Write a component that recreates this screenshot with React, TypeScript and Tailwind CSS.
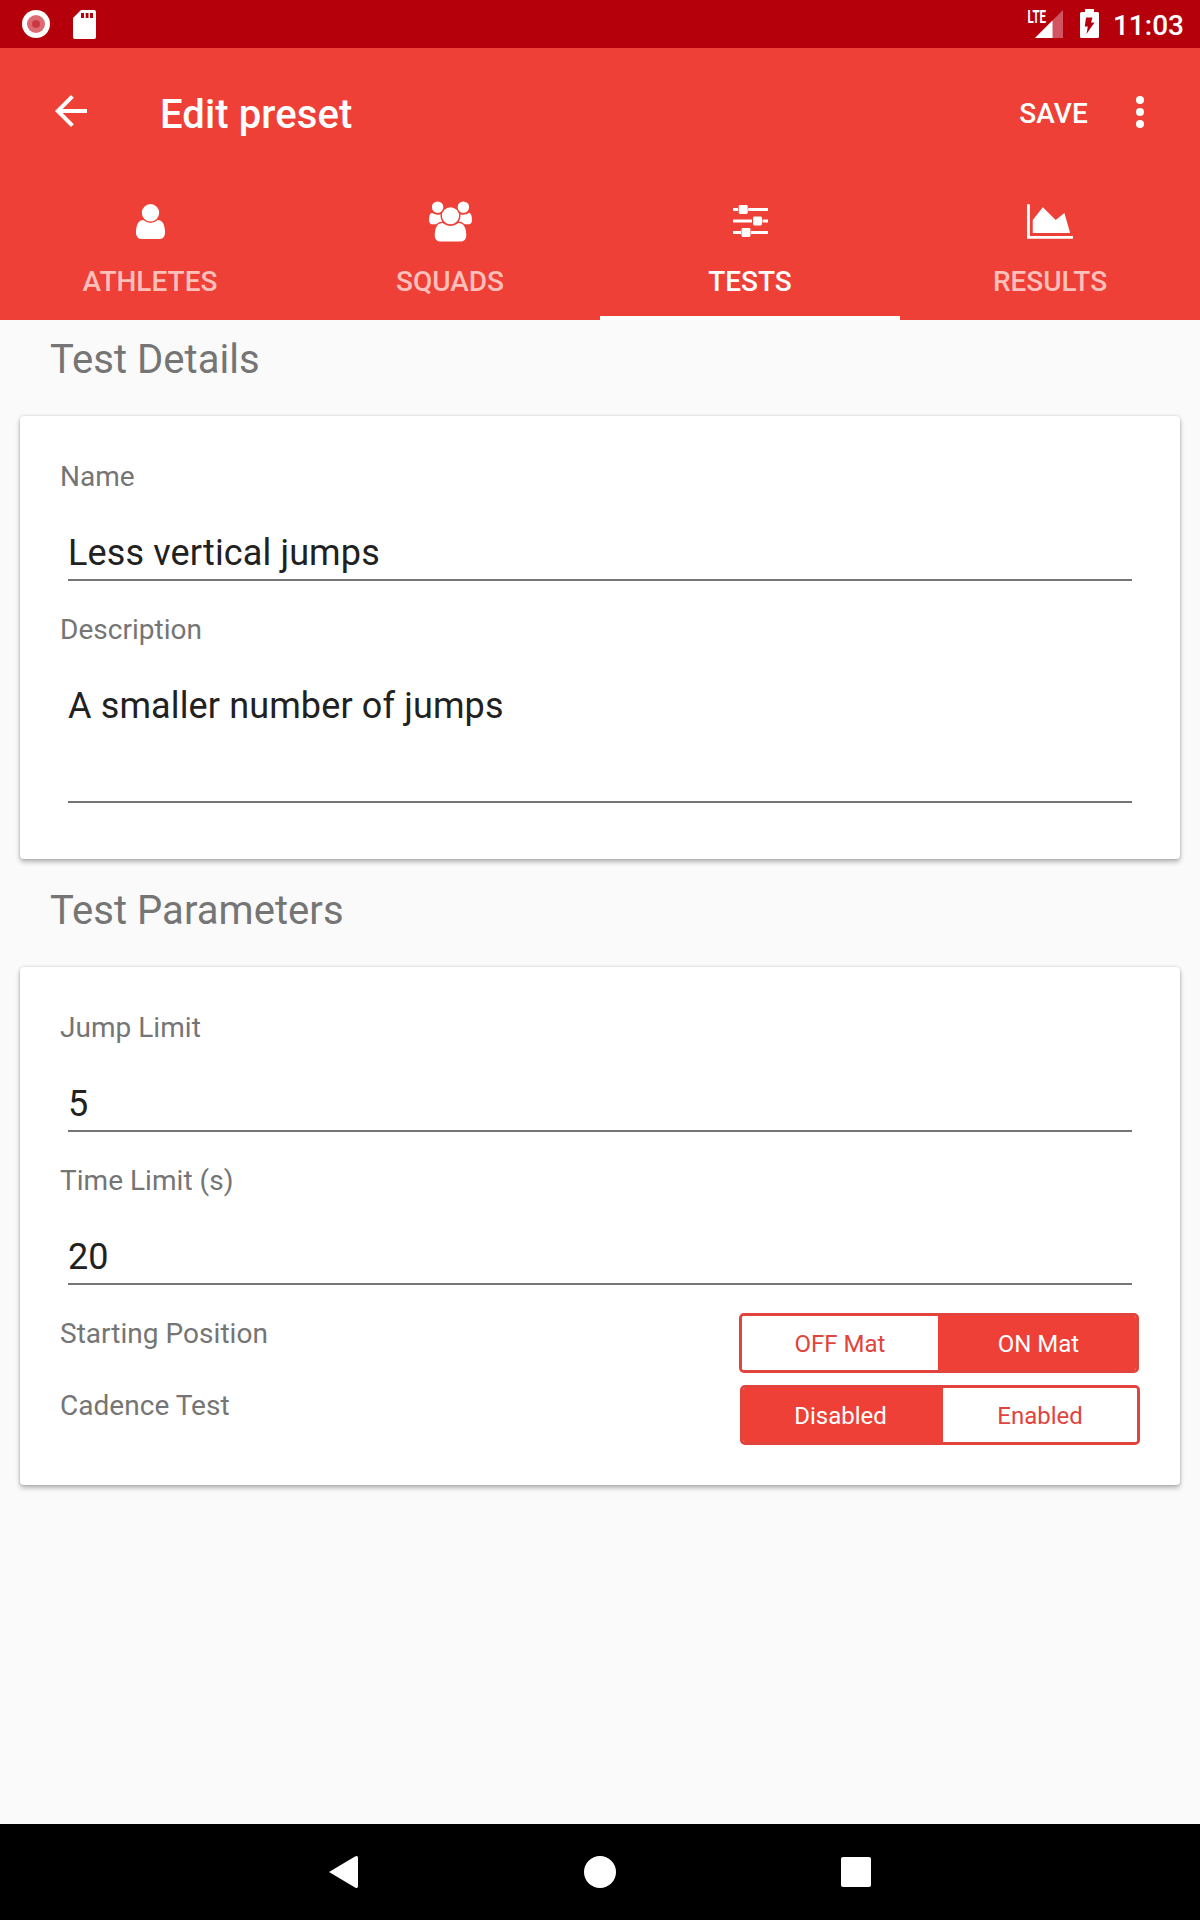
import type { ReactNode } from 'react'

const TABS = [
  { label: 'ATHLETES', icon: <UserIcon />, active: false },
  { label: 'SQUADS', icon: <UsersIcon />, active: false },
  { label: 'TESTS', icon: <SlidersIcon />, active: true },
  { label: 'RESULTS', icon: <ChartIcon />, active: false },
]

function UserIcon() {
  return (
    <svg width="29" height="35" viewBox="256 128 1280 1536" fill="currentColor">
      <path d="M1536 1399q0 109-62.5 187t-150.5 78h-854q-88 0-150.5-78t-62.5-187q0-85 8.5-160.5t31.5-152 58.5-131 94-89 134.5-34.5q131 128 313 128t313-128q76 0 134.5 34.5t94 89 58.5 131 31.5 152 8.5 160.5zm-256-887q0 159-112.5 271.5t-271.5 112.5-271.5-112.5-112.5-271.5 112.5-271.5 271.5-112.5 271.5 112.5 112.5 271.5z" />
    </svg>
  )
}

function UsersIcon() {
  return (
    <svg width="43" height="41" viewBox="0 0 1920 1792" fill="currentColor">
      <path d="M593 896q-162 5-265 128h-134q-82 0-138-40.5t-56-118.5q0-353 124-353 6 0 43.5 21t97.5 42.5 119 21.5q67 0 133-23-5 37-5 66 0 139 81 256zm1071 637q0 120-73 189.5t-194 69.5h-874q-121 0-194-69.5t-73-189.5q0-53 3.5-103.5t14-109 26.5-108.5 43-97.5 62-81 85.5-53.5 111.5-20q10 0 43 21.5t73 48 107 48 135 21.5 135-21.5 107-48 73-48 43-21.5q61 0 111.5 20t85.5 53.5 62 81 43 97.5 26.5 108.5 14 109 3.5 103.5zm-1024-1277q0 106-75 181t-181 75-181-75-75-181 75-181 181-75 181 75 75 181zm704 384q0 159-112.5 271.5t-271.5 112.5-271.5-112.5-112.5-271.5 112.5-271.5 271.5-112.5 271.5 112.5 112.5 271.5zm576 225q0 78-56 118.5t-138 40.5h-134q-103-123-265-128 81-117 81-256 0-29-5-66 66 23 133 23 59 0 119-21.5t97.5-42.5 43.5-21q124 0 124 353zm-128-609q0 106-75 181t-181 75-181-75-75-181 75-181 181-75 181 75 75 181z" />
    </svg>
  )
}

function SlidersIcon() {
  return (
    <svg className="-mt-px" width="35" height="32" viewBox="0 0 35 32" fill="currentColor">
      <path d="M0 3h5v3H0zM15.200 3H35v3H15.200zM0 14.500h19v3H0zM29.500 14.500H35v3h-5.500zM0 26h8v3H0zM18 26h17v3H18z" />
      <rect x="5.700" width="9" height="9" rx="1.400" />
      <rect x="20" y="11.500" width="9" height="9" rx="1.400" />
      <rect x="8.500" y="23" width="9" height="9" rx="1.400" />
    </svg>
  )
}

function ChartIcon() {
  return (
    <svg width="46" height="35" viewBox="0 128 2048 1536" fill="currentColor">
      <path d="M2048 1536v128h-2048v-1536h128v1408h1920zm-384-1024l256 896h-1664v-576l448-576 576 576z" />
    </svg>
  )
}

function StatusBar() {
  return (
    <div className="flex h-12 items-center bg-[#b5000b] pl-[22px] pr-4 text-white">
      <svg width="28" height="28" viewBox="0 0 28 28">
        <circle cx="14" cy="14" r="14" fill="#fff" />
        <circle cx="14" cy="14" r="9" fill="#db6b74" />
        <circle cx="14" cy="14" r="4" fill="#cb3844" />
      </svg>
      <svg className="ml-[23px]" width="23" height="29" viewBox="0 0 23 29">
        <path d="M8 0h13q2 0 2 2v25q0 2-2 2H2q-2 0-2-2V8z" fill="#fff" />
        <path d="M8 3h3v5H8zM12.700 3h2.800v5h-2.800zM17 3h3v5h-3z" fill="#b5000b" />
      </svg>
      <div className="flex-1" />
      <svg className="overflow-visible" width="36" height="28" viewBox="0 0 36 28">
        <path d="M35 0v28H7z" fill="#d05560" />
        <path d="M24.500 10.500V28H7z" fill="#fff" />
        <text x="-0.500" y="12.700" fontSize="17.500" fontWeight="700" fontFamily="Roboto, sans-serif" textLength="18.500" lengthAdjust="spacingAndGlyphs" fill="#fff">LTE</text>
      </svg>
      <svg className="-mt-px ml-4" width="19" height="29" viewBox="0 0 19 29">
        <path d="M5 0h9v3h3.500q1.500 0 1.500 1.500v23q0 1.500-1.500 1.500h-16Q0 29 0 27.500v-23Q0 3 1.500 3H5z" fill="#fff" />
        <path d="M6 8.500h6.500L11 13.500h3.500L6.500 25l1.300-7.500H4.800z" fill="#b5000b" />
      </svg>
      <span className="ml-[14px] mt-1 text-[28px] font-medium leading-8">11:03</span>
    </div>
  )
}

function Toolbar() {
  return (
    <div className="flex h-32 items-center pl-[47px] pr-9">
      <svg className="-mt-0.5" width="48" height="48" viewBox="0 0 24 24" fill="currentColor">
        <path d="M20 11H7.830l5.590-5.590L12 4l-8 8 8 8 1.410-1.410L7.830 13H20v-2z" />
      </svg>
      <h1 className="ml-[65px] mt-1.5 flex-1 text-[40px] font-medium leading-[48px] tracking-[0.1px]">Edit preset</h1>
      <button className="mt-1 text-[28px] font-medium leading-8 tracking-[0.15px]">SAVE</button>
      <svg className="ml-7" width="48" height="48" viewBox="0 0 24 24" fill="currentColor">
        <circle cx="12" cy="6" r="2" />
        <circle cx="12" cy="12" r="2" />
        <circle cx="12" cy="18" r="2" />
      </svg>
    </div>
  )
}

function TabBar() {
  return (
    <nav className="grid h-36 grid-cols-4">
      {TABS.map((tab) => (
        <button key={tab.label} className={`flex flex-col items-center border-b-4 pt-[22px] ${tab.active ? 'border-white' : 'border-transparent'}`}>
          <span className="flex h-[47px] items-center">{tab.icon}</span>
          <span className={`mt-[21px] text-[28px] font-medium leading-8 ${tab.active ? 'text-white' : 'text-[#ffbfba]'}`}>{tab.label}</span>
        </button>
      ))}
    </nav>
  )
}

function SectionTitle({ children }: { children: ReactNode }) {
  return <h2 className="pl-[30px] text-[40px] leading-[47px] tracking-[0.05px] text-[#757575]">{children}</h2>
}

function Card({ children }: { children: ReactNode }) {
  return (
    <div className="mt-[33px] rounded-[4px] bg-white pl-10 pr-10 pt-[44px] shadow-[0_3px_5px_rgba(0,0,0,0.28),0_0_3px_rgba(0,0,0,0.16)]">
      {children}
    </div>
  )
}

function Label({ children }: { children: ReactNode }) {
  return <div className="text-[28px] leading-[33px] tracking-[0.03px] text-[#757575]">{children}</div>
}

function Field({ label, value, multiline }: { label: string; value: string; multiline?: boolean }) {
  return (
    <div className="pb-8">
      <Label>{label}</Label>
      <div className={`mx-2 mt-[38px] border-b-2 border-[#757575] text-[36px] leading-[44px] tracking-[0.13px] text-[#212121] ${multiline ? 'h-[119px]' : 'h-[50px]'}`}>
        {value}
      </div>
    </div>
  )
}

function Segmented({ options, selected }: { options: [string, string]; selected: number }) {
  return (
    <div className={`grid h-[60px] w-[400px] overflow-hidden rounded-[5px] border-[3px] border-[#e2433d] text-[24px] leading-7 ${selected === 0 ? 'grid-cols-[200px_194px]' : 'grid-cols-[196px_198px]'}`}>
      {options.map((option, i) => (
        <button
          key={option}
          className={`pt-0.5 ${i === selected ? 'bg-[#ee4036] text-white' : 'bg-white text-[#e2433d]'} ${i === selected ? (i === 0 ? 'pr-[5px]' : 'pl-[3px]') : ''}`}
        >
          {option}
        </button>
      ))}
    </div>
  )
}

export default function App() {
  return (
    <div className="flex h-[1920px] w-[1200px] flex-col overflow-hidden bg-[#fafafa] font-['Roboto',sans-serif]">
      <StatusBar />
      <header className="bg-[#ee4036] text-white">
        <Toolbar />
        <TabBar />
      </header>

      <main className="flex-1 px-5 pt-4">
        <SectionTitle>Test Details</SectionTitle>
        <Card>
          <Field label="Name" value="Less vertical jumps" />
          <Field label="Description" value="A smaller number of jumps" multiline />
          <div className="h-6" />
        </Card>

        <div className="h-7" />
        <SectionTitle>Test Parameters</SectionTitle>
        <Card>
          <Field label="Jump Limit" value="5" />
          <Field label="Time Limit (s)" value="20" />
          <div className="flex h-[72px] justify-between pr-px">
            <Label>Starting Position</Label>
            <div className="-mt-1">
              <Segmented options={['OFF Mat', 'ON Mat']} selected={1} />
            </div>
          </div>
          <div className="flex h-24 justify-between">
            <Label>Cadence Test</Label>
            <div className="-mt-1">
              <Segmented options={['Disabled', 'Enabled']} selected={0} />
            </div>
          </div>
        </Card>
      </main>

      <footer className="flex h-24 items-center justify-center bg-black text-white">
        <svg width="544" height="34" viewBox="0 0 544 34" fill="currentColor">
          <path d="M1 17L27 1.500Q30 0 30 3v28Q30 34 27 32.500z" />
          <circle cx="272" cy="17" r="16" />
          <rect x="513" y="2" width="30" height="30" rx="2" />
        </svg>
      </footer>
    </div>
  )
}
